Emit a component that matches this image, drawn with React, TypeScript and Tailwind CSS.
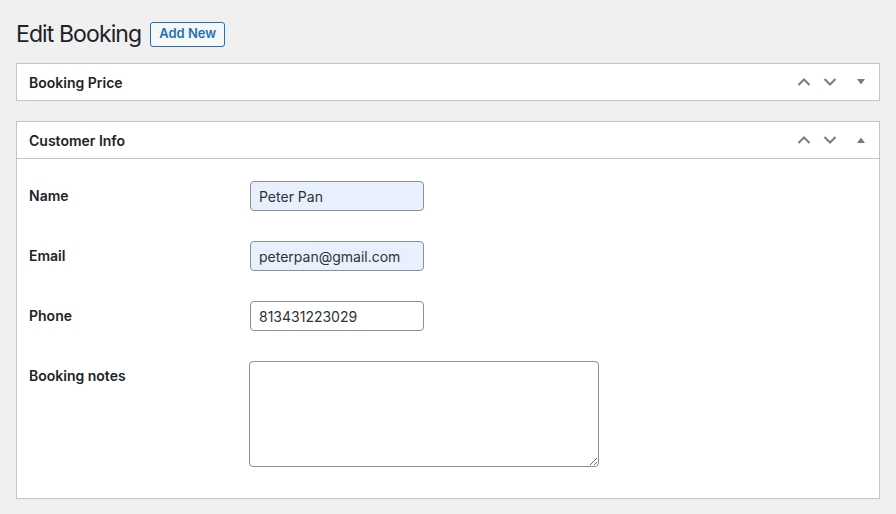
import React from 'react';

function ChevronUp() {
  return (
    <svg width="14" height="10" viewBox="0 0 14 10" fill="none">
      <path d="M1.5 8L7 2.5L12.5 8" stroke="#787c82" strokeWidth="2" />
    </svg>
  );
}

function ChevronDown() {
  return (
    <svg width="14" height="10" viewBox="0 0 14 10" fill="none">
      <path d="M1.5 2L7 7.5L12.5 2" stroke="#787c82" strokeWidth="2" />
    </svg>
  );
}

function Triangle({ up }: { up: boolean }) {
  return (
    <svg width="8" height="6" viewBox="0 0 8 6">
      {up ? <path d="M0 6L4 0.5L8 6Z" fill="#787c82" /> : <path d="M0 0L8 0L4 5.5Z" fill="#787c82" />}
    </svg>
  );
}

function PanelHeader({ title, open }: { title: string; open: boolean }) {
  return (
    <div className={`flex items-center ${open ? 'h-[37px] border-b border-[#c3c4c7]' : 'h-[36px]'}`}>
      <h2 className="flex-1 pl-3 text-[14px] font-semibold text-[#1d2327]">{title}</h2>
      <div className="flex items-center h-full">
        <button className="w-[26px] h-full flex items-center justify-center"><ChevronUp /></button>
        <button className="w-[26px] h-full flex items-center justify-center"><ChevronDown /></button>
        <button className="w-[36px] h-full flex items-center justify-center"><Triangle up={open} /></button>
      </div>
    </div>
  );
}

const inputCls =
  'w-[174px] h-[30px] px-2 rounded-[4px] border border-[#8c8f94] text-[14px] text-[#2c3338] outline-none';

export default function App() {
  return (
    <div className="min-h-screen bg-[#f0f0f1] px-4 pt-[20px]" style={{ fontFamily: 'Inter, "Noto Sans", sans-serif' }}>
      <div className="flex items-center gap-[9px] h-[28px]">
        <h1 className="text-[23px] font-normal text-[#1d2327] leading-none tracking-[-0.9px]">Edit Booking</h1>
        <button className="h-[25px] px-[8px] rounded-[3px] border border-[#2271b1] bg-[#f6f7f7] text-[13px] font-semibold text-[#2271b1]">
          Add New
        </button>
      </div>

      <div className="mt-[15px] bg-white border border-[#c3c4c7]">
        <PanelHeader title="Booking Price" open={false} />
      </div>

      <div className="mt-[20px] bg-white border border-[#c3c4c7]">
        <PanelHeader title="Customer Info" open={true} />
        <div className="pl-3 pt-[7px] pb-4">
          {[
            { label: 'Name', value: 'Peter Pan', filled: true },
            { label: 'Email', value: 'peterpan@gmail.com', filled: true },
            { label: 'Phone', value: '813431223029', filled: false },
          ].map((f) => (
            <div key={f.label} className="flex py-[15px]">
              <label className="w-[221px] pt-[6px] leading-[18px] text-[14px] font-semibold text-[#1d2327]">{f.label}</label>
              <input
                defaultValue={f.value}
                className={`${inputCls} ${f.filled ? 'bg-[#e8f0fe]' : 'bg-white'}`}
              />
            </div>
          ))}
          <div className="flex py-[15px]">
            <label className="w-[220px] pt-[6px] leading-[18px] text-[14px] font-semibold text-[#1d2327]">Booking notes</label>
            <textarea className="w-[350px] h-[106px] rounded-[4px] border border-[#8c8f94] bg-white outline-none" />
          </div>
        </div>
      </div>
    </div>
  );
}
